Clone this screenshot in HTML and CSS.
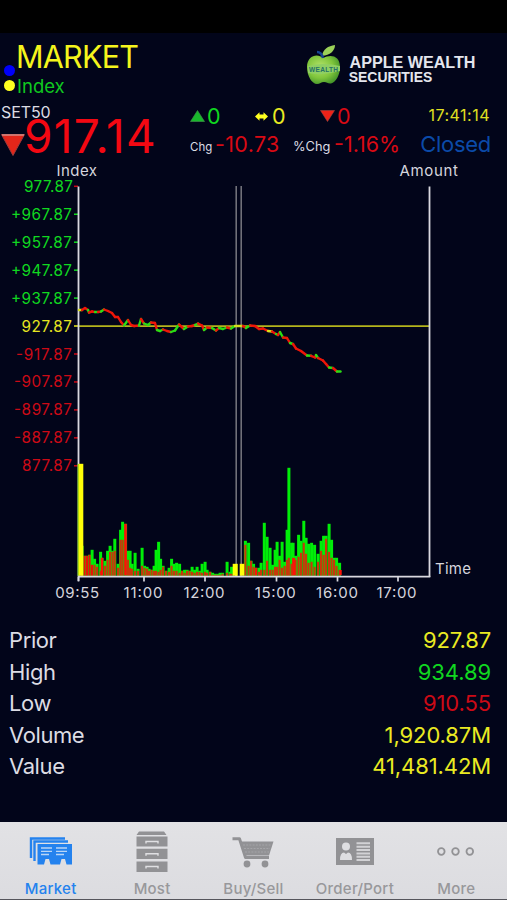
FILE: index.html
```html
<!DOCTYPE html>
<html lang="en">
<head>
<meta charset="utf-8">
<title>Market</title>
<link rel="stylesheet" href="styles.css">
</head>
<body>
<div class="status"></div>
<main class="screen">
  <header class="brand">
    <div class="dots"><i class="dot blue"></i><i class="dot gold"></i></div>
    <div class="titles">
      <h1>MARKET</h1>
      <div class="sub">Index</div>
    </div>
    <svg class="logo" width="174" height="48" viewBox="304 41 174 48">
      <defs>
        <radialGradient id="apple" cx=".4" cy=".4" r=".65"><stop offset="0" stop-color="#b4e36a"/><stop offset=".6" stop-color="#7fc53c"/><stop offset="1" stop-color="#45952a"/></radialGradient>
      </defs>
      <path d="M323 58C318 53 307 55 307 67C307 76 312 84 317 84C320 84 321 82 324 82C327 82 328 84 331 83.500C336 82 340 75 340 67C340 55 330 54 323 58Z" fill="url(#apple)"/>
      <path d="M322 56C323 49 328 46 335 45C335 51 330 55 322 56Z" fill="#9bd158"/>
      <path d="M317 52C320 52 322 54 323 58" fill="none" stroke="#144391" stroke-width="2.500"/>
      <path d="M308 66Q323 62 340 66V71Q323 76 308 73Z" fill="#8fcf63"/>
      <text x="309" y="71.500" textLength="29" class="logo-tag">WEALTH</text>
      <text x="349.500" y="68" textLength="126" lengthAdjust="spacingAndGlyphs" class="logo-a">APPLE WEALTH</text>
      <text x="348.800" y="82" textLength="83.500" lengthAdjust="spacingAndGlyphs" class="logo-b">SECURITIES</text>
    </svg>
  </header>

  <section class="quote">
    <div class="last">
      <div class="symbol">SET50</div>
      <div class="price">
        <svg width="26" height="24" viewBox="0 0 26 24"><path d="M1.500 1.500H24.500L13 22.500Z" fill="#e3261a" stroke="#a03a3a"/><path d="M2 2H24" stroke="#d58b85" stroke-width="1.500"/></svg>
        <b>917.14</b>
      </div>
    </div>
    <div class="stats">
      <div class="line counts">
        <span class="count up"><svg width="15" height="12" viewBox="0 0 15 12"><path d="M7.500 .5L14.500 11.500H.5Z" fill="#18b92c" stroke="#45944c" stroke-width=".6"/></svg>0</span>
        <span class="count flat"><svg width="13" height="9" viewBox="0 0 13 9"><path d="M0 4.500L4.500 .2V2.500H8.500V.2L13 4.500L8.500 8.800V6.500H4.500V8.800Z" fill="#ffff20"/></svg>0</span>
        <span class="count down"><svg width="15" height="12" viewBox="0 0 15 12"><path d="M.5 .5H14.500L7.500 11.500Z" fill="#ee2218" stroke="#a24840" stroke-width=".6"/></svg>0</span>
        <span class="clock">17:41:14</span>
      </div>
      <div class="line changes">
        <small class="chg">Chg</small><span class="delta">-10.73</span>
        <small class="pchg">%Chg</small><span class="pct">-1.16%</span>
        <span class="state">Closed</span>
      </div>
    </div>
  </section>

  <svg id="chart" class="chart" width="507" height="450" viewBox="0 160 507 450">
    <g class="caption">
      <text x="56.500" y="175.600" textLength="40.500">Index</text>
      <text x="399.500" y="175.600" textLength="58.500">Amount</text>
      <text x="435" y="573.700" textLength="36">Time</text>
    </g>
    <g id="levels" class="levels"></g>
    <path d="M236.200 186V576M241.200 186V576" stroke="#77777f" stroke-width="1.500"/>
    <path d="M74 326.200H429" stroke="#b5b51c" stroke-width="1.800"/>
    <path d="M78.500 186.500V581M429.500 186.500V577" stroke="#d9d9e0" stroke-width="1.800"/>
    <g id="volume"></g>
    <path d="M78 576.700H430.300" stroke="#d9d9e0" stroke-width="1.700"/>
    <g id="trend" fill="none" stroke-width="2.400" stroke-linejoin="round"></g>
    <g id="times" class="times"></g>
  </svg>

  <dl class="summary">
    <div><dt>Prior</dt><dd class="flat">927.87</dd></div>
    <div><dt>High</dt><dd class="up">934.89</dd></div>
    <div><dt>Low</dt><dd class="low">910.55</dd></div>
    <div><dt>Volume</dt><dd class="flat">1,920.87M</dd></div>
    <div><dt>Value</dt><dd class="flat">41,481.42M</dd></div>
  </dl>
</main>

<nav class="tabs">
  <a class="tab active">
    <svg width="44" height="44" viewBox="0 0 44 44">
      <path d="M2 23V3.500H36M5.500 26V6.500H39" fill="none" stroke="#2482ee" stroke-width="2.400"/>
      <path d="M8.500 9H43V29.500H37.500L36 24H32.500L31 29.500H21.500L20 24H16.500L15 29.500H8.500Z" fill="#2482ee"/>
      <path d="M12 13H23M12 16.300H23M12 19.500H20M27 13H38M27 16.300H38M27 19.500H35" stroke="#b9d5f6" stroke-width="1.300"/>
    </svg>Market</a>
  <a class="tab">
    <svg width="44" height="44" viewBox="0 1 44 44">
      <path d="M9 -2.500H34L36.500 1H6.500ZM6.500 2.500H37.500V12.500H6.500ZM6.500 14.700H37.500V25H6.500ZM6.500 27.500H37.500V38H6.500Z" fill="#929295"/>
      <path d="M16 9.500V7.500H28V9.500M16 21.800V19.800H28V21.800M16 34.500V32.500H28V34.500" fill="none" stroke="#e0e0e3" stroke-width="1.400"/>
    </svg>Most</a>
  <a class="tab">
    <svg width="44" height="44" viewBox="0 0 44 44">
      <path d="M1.500 3.800H8.500L14.500 22.500H38" fill="none" stroke="#929295" stroke-width="3" stroke-linejoin="round"/>
      <path d="M9 6.500H42.500L38 20.500H13.500Z" fill="#929295"/>
      <path d="M12 10H40M13 13.500H39M14 17H38" stroke="#aaaaad" stroke-width=".8" stroke-dasharray="2 1.200"/>
      <circle cx="16" cy="29" r="3.400" fill="#929295"/><circle cx="34" cy="29" r="3.400" fill="#929295"/>
    </svg>Buy/Sell</a>
  <a class="tab">
    <svg width="44" height="44" viewBox="0 0 44 44">
      <path d="M3 3H41V30H3Z" fill="#929295"/>
      <circle cx="13" cy="11.500" r="4" fill="#dedee1"/>
      <path d="M7 25Q7 17.500 11 17.500L13 19L15 17.500Q19 17.500 19 25Z" fill="#dedee1"/>
      <path d="M23.500 8.300H37M23.500 11.700H37M23.500 15H37M23.500 18.400H37M23.500 21.800H37M23.500 25H37" stroke="#d2d2d5" stroke-width="2"/>
    </svg>Order/Port</a>
  <a class="tab">
    <svg width="44" height="44" viewBox="0 0 44 44">
      <g fill="none" stroke="#929295" stroke-width="1.800"><circle cx="7.300" cy="16.500" r="3.300"/><circle cx="21.500" cy="16.500" r="3.300"/><circle cx="35.800" cy="16.500" r="3.300"/></g>
    </svg>More</a>
</nav>
<script src="chart.js"></script>
</body>
</html>
```

FILE: styles.css
```css
* { box-sizing: border-box; }
body {
  margin: 0;
  width: 507px;
  height: 900px;
  overflow: hidden;
  display: flex;
  flex-direction: column;
  background: #02051a;
  color: #dcdce4;
  font-family: Inter, "Liberation Sans", sans-serif;
}
svg { display: block; flex: none; overflow: visible; }
.status { height: 33px; background: #000; flex: none; }
.screen { height: 789px; flex: none; }

.up { color: #10d820; }
.flat { color: #eaea22; }
.down { color: #d90a14; }
.low { color: #cc0a16; }

.brand { display: flex; height: 68px; padding: 5px 0 0 4px; }
.dots { width: 12px; padding-top: 27px; display: flex; flex-direction: column; gap: 4px; }
.dot { width: 11px; height: 11px; border-radius: 50%; }
.blue { background: #0000fa; }
.gold { background: #ffff20; }
.titles { width: 288px; }
h1 { margin: 0; font-size: 30.5px; line-height: 37px; font-weight: 400; color: #f5f51c; letter-spacing: -.75px; }
.sub { font-size: 18.5px; line-height: 22px; color: #10c820; padding-left: 1px; }
.logo { margin-top: 3px; }

.quote { display: flex; height: 59px; }
.last { width: 190px; padding-top: 2px; }
.symbol { font-size: 16px; line-height: 18px; padding-left: 1px; letter-spacing: -.1px; }
.price { display: flex; height: 30px; }
.price svg { margin-top: 12px; }
.price b { font-size: 46px; line-height: 30px; font-weight: 400; color: #f30812; margin-left: -2px; letter-spacing: 1.3px; }
.stats { width: 301px; }
.line { display: flex; height: 29px; line-height: 28px; font-size: 21.5px; white-space: nowrap; }
.count { display: flex; align-items: center; gap: 2px; width: 65px; padding-top: 1px; }
.count.flat { gap: 4px; }
.clock { margin-left: auto; font-size: 16px; line-height: 29px; color: #e0e020; padding-right: 1px; letter-spacing: .5px; }
.changes { color: #d90a14; }
.changes small { color: #dcdce4; line-height: 34px; }
.chg { width: 25px; font-size: 11.500px; }
.delta { width: 78px; letter-spacing: .35px; }
.pchg { width: 41px; font-size: 12.800px; line-height: 33px; }
.state { margin-left: auto; color: #0b4aa8; font-size: 22px; letter-spacing: -.3px; }

.chart { height: 450px; }
.chart text { fill: #d6d6de; font-size: 15px; }
.levels text { text-anchor: end; font-size: 15.3px; }
.times text { text-anchor: middle; font-size: 15px; }
.chart .green { fill: #10d820; }
.chart .red { fill: #cc0a16; }
.chart .yellow { fill: #e6e620; }
.logo text { font-family: "Liberation Sans", Arial, sans-serif; font-weight: 700; fill: #e4e6ee; }
.logo .logo-a { font-size: 16.500px; }
.logo .logo-b { font-size: 15px; }
.logo .logo-tag { font-size: 6.500px; fill: #267266; }

.summary { margin: 0; padding: 15px 16px 0 9px; }
.summary div { display: flex; justify-content: space-between; height: 31.600px; line-height: 31.600px; font-size: 22px; }
.summary dt, .summary dd { margin: 0; }
.summary dt { letter-spacing: -.4px; }
.summary dd { letter-spacing: -.1px; }

.tabs {
  height: 78px;
  display: grid;
  grid-template-columns: repeat(5, 1fr);
  padding-top: 13px;
  background: linear-gradient(#e2e2e5, #dcdce0);
  border-bottom: 1px solid #55555c;
}
.tab { display: flex; flex-direction: column; align-items: center; font-size: 15px; font-weight: 500; line-height: 20px; letter-spacing: .25px; color: #98989b; }
.tab svg { height: 44px; }
.active { color: #2482ee; }
```

FILE: chart.js
```js
const NS = 'http://www.w3.org/2000/svg';
function add(parent, tag, attrs, text) {
  const el = document.createElementNS(NS, tag);
  for (const k in attrs) el.setAttribute(k, attrs[k]);
  if (text) el.textContent = text;
  document.getElementById(parent).appendChild(el);
}

const levels = [
  ['977.87', 'green', 49], ['+967.87', 'green', 61], ['+957.87', 'green', 61],
  ['+947.87', 'green', 61], ['+937.87', 'green', 61], ['927.87', 'yellow', 50.5],
  ['-917.87', 'red', 56], ['-907.87', 'red', 58], ['-897.87', 'red', 58],
  ['-887.87', 'red', 58], ['877.87', 'red', 50]
];
const tick = { green: '#10d820', yellow: '#e6e620', red: '#cc0a16' };
levels.forEach(([label, tone, width], i) => {
  const y = 186.3 + i * 27.95;
  add('levels', 'text', { x: i ? 72 : 73, y: y + 5.5, class: tone, textLength: width }, label);
  add('levels', 'path', { d: `M74 ${y}h4`, stroke: i ? tick[tone] : '#cc0a16', 'stroke-width': 1.5 });
});

[['09:55', 77.2, 78.5, 44], ['11:00', 143, 144, 39], ['12:00', 204, 205, 41],
 ['15:00', 275.2, 276.5, 41], ['16:00', 337, 337.5, 42], ['17:00', 396.5, 398, 40]
].forEach(([label, x, t, w]) => {
  add('times', 'text', { x, y: 597.6, textLength: w }, label);
  add('times', 'path', { d: `M${t} 577v4.500`, stroke: '#d9d9e0', 'stroke-width': 1.7 });
});

// [x, buy height, sell height]
const bars = [
  [82, 30, 30], [84.5, 20, 20], [87, 20, 20], [89.5, 21, 21], [92, 26, 11], [94.5, 17, 11], [97, 12, 9],
  [100.5, 24, 5], [102, 18, 18], [105, 15, 10], [107.5, 25, 16], [110, 30, 24], [112.500, 25, 24],
  [114.7, 37, 25], [118, 12, 8], [120.5, 46, 36], [122.5, 54, 36], [125.5, 52, 52], [128, 25, 16],
  [130, 25, 8], [132, 12, 7], [135, 23, 5], [138, 7, 5], [142, 28, 10], [144.5, 10, 8], [147, 9, 7],
  [149, 7, 5], [151.500, 6, 6], [154, 10, 5], [156, 26, 5], [158.5, 34, 4], [160.5, 17, 6], [163, 10, 9],
  [166, 5, 5], [169, 8, 4], [171.5, 17, 10], [174, 12, 5], [176.5, 13, 5], [179.5, 12, 3], [182, 5, 5],
  [184.500, 6, 3], [187, 6, 5], [189.5, 5, 5], [192, 9, 4], [194.5, 6, 3], [197, 9, 4], [199.500, 5, 4],
  [202, 12, 3], [205, 14, 4], [207, 6, 3], [210, 4, 4], [212.5, 3, 1], [215, 2, 1], [217.5, 2, 1],
  [220, 3, 1], [222.5, 3, 2], [227, 14, 3], [230, 4, 2], [231.500, 9, 2],
  [245.3, 35, 31], [248.5, 33, 10], [251, 15, 15], [253.5, 12, 9], [256, 8, 8], [259, 8, 4],
  [261, 13, 6], [264.2, 53, 6], [267, 39, 15], [270, 28, 6], [272.5, 11, 6], [275, 26, 9], [277, 34, 9],
  [279.5, 20, 16], [282, 34, 8], [284.500, 14, 10], [287, 46, 16], [288.8, 108, 18], [291.500, 33, 12],
  [293, 33, 18], [295.500, 20, 16], [298.5, 41, 19], [301, 35, 23], [303.7, 55, 33], [306, 38, 22],
  [308.5, 32, 13], [311.500, 33, 14], [314.500, 31, 9], [318, 22, 14], [321, 35, 25], [323.5, 40, 21],
  [326, 40, 37], [329, 52, 24], [331.500, 36, 18], [334, 18, 16], [336.500, 18, 10], [339.500, 13, 6]
];
const base = 575.8;
for (const [x, buy] of bars)
  add('volume', 'rect', { x: x - 1.4, y: base - buy, width: 3, height: buy, fill: '#00ee08' });
for (const [x, , sell] of bars)
  add('volume', 'rect', { x: x - 1, y: base - sell, width: 2.1, height: sell, fill: x < 93 ? '#e91206' : '#c7380a' });
for (const [x, h, w] of [[78, 112, 5.3], [232.7, 12, 5], [239.7, 12, 4.5]])
  add('volume', 'rect', { x, y: base - h, width: w, height: h, fill: '#ffff08' });
add('volume', 'path', { d: 'M78 464V576', stroke: '#66b817', 'stroke-width': 1 });
add('volume', 'path', { d: 'M125.500 524V575M102 558V575M340.500 570V575M256 568V575M294 558V575', stroke: '#ff1008', 'stroke-width': 2.4 });
add('volume', 'path', { d: 'M236.200 564V576', stroke: '#ffff08', 'stroke-width': 2 });

// [x, y, colour of the segment that ends here]
const trend = [
  [79, 310], [82, 310, 'y'], [85, 308, 'r'], [88, 310, 'r'], [89, 312.5, 'g'], [92, 311.5, 'r'],
  [95, 312, 'r'], [98, 312, 'g'], [101, 311.5, 'r'], [104, 309.5, 'g'], [108, 311, 'r'], [112, 313, 'r'],
  [115, 317, 'r'], [118, 317, 'r'], [121, 322, 'r'], [124, 325.5, 'r'], [128, 320, 'g'], [131, 325, 'r'],
  [134, 326, 'r'], [139, 325.5, 'r'], [141, 319, 'g'], [144, 323.5, 'r'], [148, 325, 'g'], [151, 322.5, 'g'],
  [155, 323, 'r'], [157, 330, 'r'], [160, 331, 'g'], [163, 329.5, 'g'], [167, 331, 'r'], [171, 332, 'r'],
  [175, 330.5, 'g'], [179, 324.5, 'g'], [184, 329, 'r'], [188, 326.5, 'g'], [192, 326, 'r'],
  [195, 325, 'r'], [198, 323.5, 'g'], [202, 325.5, 'r'], [204, 330, 'r'], [207, 327.5, 'g'],
  [212, 328, 'r'], [216, 330.5, 'g'], [219, 328, 'r'], [223, 329, 'g'], [227, 327.5, 'g'],
  [231, 328.5, 'r'], [235, 326, 'g'], [243, 326, 'y'], [246, 328, 'r'], [250, 325.5, 'g'],
  [255, 326, 'r'], [259, 329, 'r'], [263, 328.5, 'r'], [268, 331, 'r'], [272, 331.500, 'y'], [276, 334, 'r'],
  [278, 335, 'g'], [280, 332, 'r'], [283, 337.5, 'g'], [287, 338, 'r'], [290, 343, 'r'], [293, 344, 'g'],
  [296, 348.5, 'r'], [301, 351, 'r'], [307, 355.5, 'r'], [311, 355.8, 'g'], [315, 357.500, 'r'],
  [316, 355, 'r'], [318, 358, 'g'], [323, 360.5, 'r'], [326, 364, 'r'], [329, 367.500, 'r'],
  [333, 368, 'g'], [337, 371.5, 'r'], [340.5, 371.5, 'g']
];
const ink = { r: '#ef1608', g: '#2ade14', y: '#d8e01c' };
for (let i = 1; i < trend.length; i++)
  add('trend', 'path', { d: `M${trend[i - 1][0]} ${trend[i - 1][1]}L${trend[i][0]} ${trend[i][1]}`, stroke: ink[trend[i][2]], 'stroke-linecap': 'round' });
```
